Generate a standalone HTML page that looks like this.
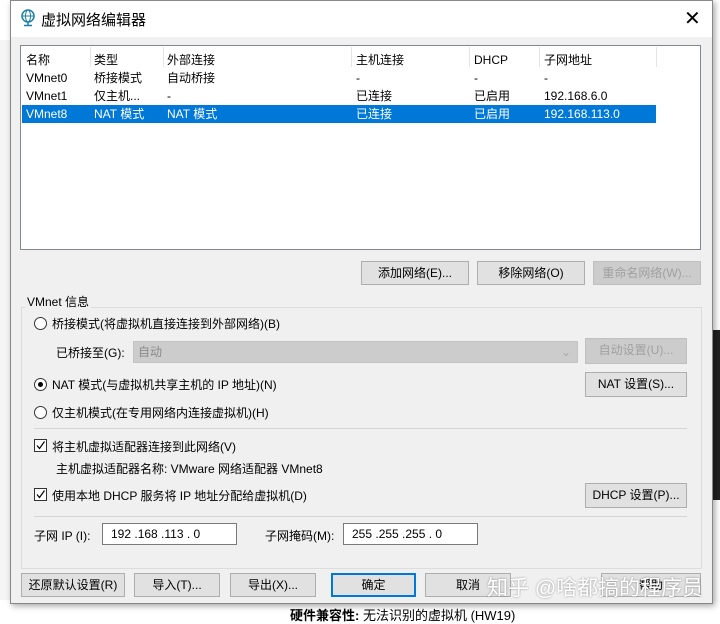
<!DOCTYPE html>
<html><head><meta charset="utf-8"><style>
*{box-sizing:border-box;margin:0;padding:0}
body{width:720px;height:617px;overflow:hidden;background:#fff;font-family:"Liberation Sans","Noto Sans CJK SC",sans-serif;font-size:12px;color:#000;position:relative}
.a{position:absolute;white-space:nowrap}
.dlg{position:absolute;left:10px;top:0;width:703px;height:604px;background:#f0f0f0;border:1px solid #888;box-shadow:2px 2px 6px rgba(0,0,0,.35)}
.title{position:absolute;left:0;top:0;width:100%;height:36px;background:#fff}
.btn{position:absolute;height:24px;border:1px solid #adadad;background:#e1e1e1;text-align:center;line-height:22px;font-size:12px}
.dis{color:#a0a0a0;background:#cccccc;border-color:#bfbfbf}
.rad{position:absolute;width:13px;height:13px;border:1px solid #333;border-radius:50%;background:#fff}
.chk{position:absolute;width:13px;height:13px;border:1px solid #333;background:#fff}
.inp{position:absolute;height:22px;background:#fff;border:1px solid #7a7a7a;line-height:20px;padding-left:8px;font-size:12px}
</style></head><body>
<div class="a" style="left:0;top:40px;width:10px;height:560px;background:#f5f5f5"></div>
<div class="a" style="left:712px;top:330px;width:8px;height:170px;background:#222"></div>
<div class="a" style="left:290px;top:605px;font-size:13px;font-weight:bold">硬件兼容性: <span style="font-weight:normal">无法识别的虚拟机 (HW19)</span></div>
<div class="dlg">
<div class="title">
<svg class="a" style="left:9px;top:8px" width="16" height="18" viewBox="0 0 16 18"><circle cx="8" cy="7" r="6" fill="none" stroke="#1a7fa8" stroke-width="1.5"/><ellipse cx="8" cy="7" rx="2.5" ry="6" fill="none" stroke="#1a7fa8"/><line x1="2" y1="7" x2="14" y2="7" stroke="#1a7fa8"/><line x1="8" y1="13" x2="8" y2="16" stroke="#1a7fa8" stroke-width="1.5"/><line x1="4" y1="16.5" x2="12" y2="16.5" stroke="#1a7fa8" stroke-width="1.5"/></svg>
<div class="a" style="left:30px;top:8px;font-size:15px">虚拟网络编辑器</div>
<div class="a" style="left:673px;top:5px;font-size:20px;font-weight:300">✕</div>
</div>
<div class="a" style="left:9px;top:44px;width:681px;height:205px;background:#fff;border:1px solid #828790"></div>
<div class="a" style="left:11px;top:104px;width:634px;height:18px;background:#0078d7"></div>
<div class="a" style="left:79px;top:46px;width:1px;height:20px;background:#e5e5e5"></div>
<div class="a" style="left:152px;top:46px;width:1px;height:20px;background:#e5e5e5"></div>
<div class="a" style="left:340px;top:46px;width:1px;height:20px;background:#e5e5e5"></div>
<div class="a" style="left:458px;top:46px;width:1px;height:20px;background:#e5e5e5"></div>
<div class="a" style="left:528px;top:46px;width:1px;height:20px;background:#e5e5e5"></div>
<div class="a" style="left:645px;top:46px;width:1px;height:20px;background:#e5e5e5"></div>
<div class="a" style="left:15px;top:50px;line-height:18px">名称<br>VMnet0<br>VMnet1<br><span style="color:#fff">VMnet8</span></div>
<div class="a" style="left:83px;top:50px;line-height:18px">类型<br>桥接模式<br>仅主机...<br><span style="color:#fff">NAT 模式</span></div>
<div class="a" style="left:156px;top:50px;line-height:18px">外部连接<br>自动桥接<br>-<br><span style="color:#fff">NAT 模式</span></div>
<div class="a" style="left:345px;top:50px;line-height:18px">主机连接<br>-<br>已连接<br><span style="color:#fff">已连接</span></div>
<div class="a" style="left:463px;top:50px;line-height:18px">DHCP<br>-<br>已启用<br><span style="color:#fff">已启用</span></div>
<div class="a" style="left:533px;top:50px;line-height:18px">子网地址<br>-<br>192.168.6.0<br><span style="color:#fff">192.168.113.0</span></div>

<div class="btn" style="left:350px;top:260px;width:108px">添加网络(E)...</div>
<div class="btn" style="left:466px;top:260px;width:108px">移除网络(O)</div>
<div class="btn dis" style="left:582px;top:260px;width:108px">重命名网络(W)...</div>

<div class="a" style="left:10px;top:306px;width:681px;height:262px;border:1px solid #dcdcdc"></div>
<div class="a" style="left:14px;top:292px;background:#f0f0f0;padding:0 2px">VMnet 信息</div>
<div class="rad" style="left:23px;top:316px"></div>
<div class="a" style="left:41px;top:314px">桥接模式(将虚拟机直接连接到外部网络)(B)</div>
<div class="a" style="left:45px;top:343px">已桥接至(G):</div>
<div class="a" style="left:122px;top:340px;width:445px;height:22px;background:#cccccc;border:1px solid #c4c4c4;color:#8a8a8a;padding-left:4px;line-height:20px">自动<span style="position:absolute;right:6px;color:#aaa">⌄</span></div>
<div class="btn dis" style="left:574px;top:337px;width:102px;height:26px">自动设置(U)...</div>
<div class="rad" style="left:23px;top:377px"><div style="position:absolute;left:3px;top:3px;width:5px;height:5px;border-radius:50%;background:#000"></div></div>
<div class="a" style="left:41px;top:375px">NAT 模式(与虚拟机共享主机的 IP 地址)(N)</div>
<div class="btn" style="left:574px;top:371px;width:102px;height:25px">NAT 设置(S)...</div>
<div class="rad" style="left:23px;top:405px"></div>
<div class="a" style="left:41px;top:403px">仅主机模式(在专用网络内连接虚拟机)(H)</div>
<div class="a" style="left:23px;top:427px;width:653px;height:1px;background:#d5d5d5"></div>
<div class="chk" style="left:23px;top:438px"><svg width="11" height="11" style="position:absolute;left:0;top:0"><path d="M2 5.5 L4.5 8.5 L9.5 1.5" fill="none" stroke="#000" stroke-width="1.2"/></svg></div>
<div class="a" style="left:41px;top:437px">将主机虚拟适配器连接到此网络(V)</div>
<div class="a" style="left:45px;top:459px">主机虚拟适配器名称: VMware 网络适配器 VMnet8</div>
<div class="chk" style="left:23px;top:487px"><svg width="11" height="11" style="position:absolute;left:0;top:0"><path d="M2 5.5 L4.5 8.5 L9.5 1.5" fill="none" stroke="#000" stroke-width="1.2"/></svg></div>
<div class="a" style="left:41px;top:486px">使用本地 DHCP 服务将 IP 地址分配给虚拟机(D)</div>
<div class="btn" style="left:574px;top:482px;width:102px;height:25px">DHCP 设置(P)...</div>
<div class="a" style="left:23px;top:515px;width:653px;height:1px;background:#d5d5d5"></div>
<div class="a" style="left:23px;top:526px">子网 IP (I):</div>
<div class="inp" style="left:91px;top:522px;width:135px">192 .168 .113 .  0</div>
<div class="a" style="left:254px;top:526px">子网掩码(M):</div>
<div class="inp" style="left:332px;top:522px;width:135px">255 .255 .255 .  0</div>

<div class="btn" style="left:10px;top:572px;width:104px">还原默认设置(R)</div>
<div class="btn" style="left:123px;top:572px;width:86px">导入(T)...</div>
<div class="btn" style="left:219px;top:572px;width:86px">导出(X)...</div>
<div class="btn" style="left:320px;top:572px;width:85px;border:2px solid #0078d7;line-height:20px">确定</div>
<div class="btn" style="left:414px;top:572px;width:86px">取消</div>
<div class="btn" style="left:590px;top:572px;width:100px">帮助</div>
<div class="a" style="left:476px;top:571px;font-size:21px;color:#fff;text-shadow:0 0 2px rgba(0,0,0,.4)">知乎 @啥都搞的程序员</div>
</div>
</body></html>
